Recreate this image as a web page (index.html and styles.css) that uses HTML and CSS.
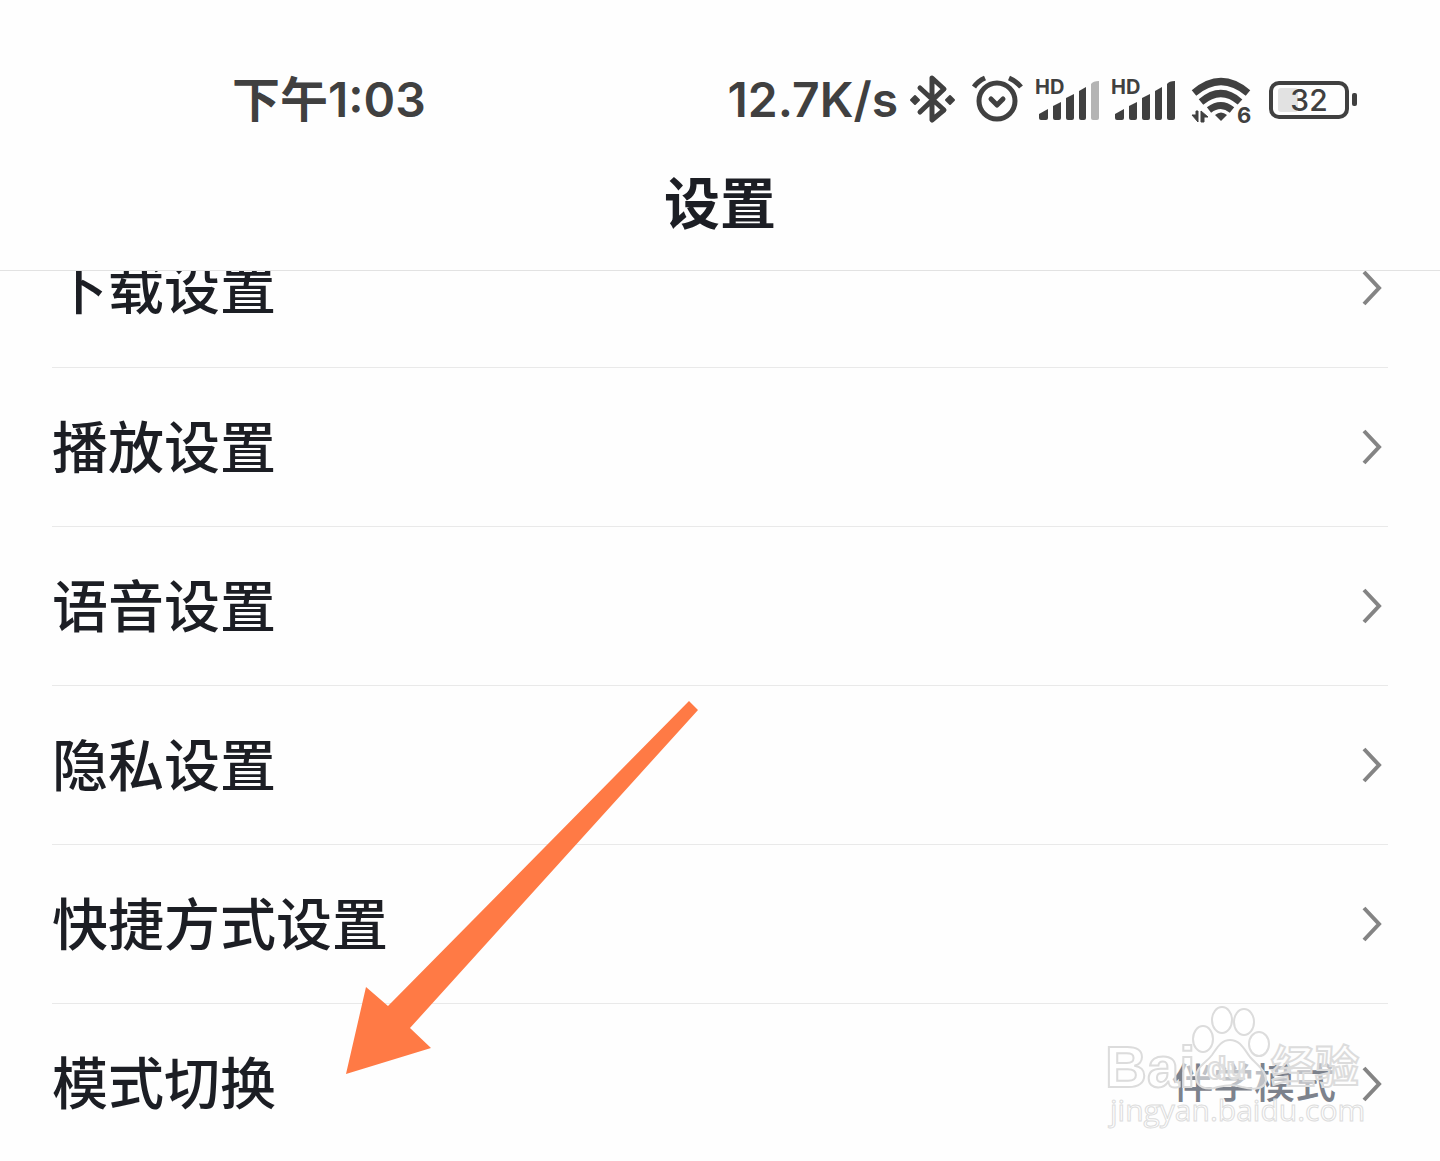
FILE: index.html
```html
<!DOCTYPE html>
<html lang="zh-CN">
<head>
    <meta charset="UTF-8">
    <meta name="viewport" content="width=device-width, initial-scale=1.0">
    <title>设置</title>
    <link rel="stylesheet" href="styles.css">
</head>
<body>
    <svg class="defs" aria-hidden="true">
        <symbol id="chevron" viewBox="0 0 24 40">
            <path d="M4 4 L19 20 L4 36" fill="none" stroke="currentColor" stroke-width="4"/>
        </symbol>
    </svg>

    <div class="app">
        <header class="header">
            <div class="status-bar">
                <span class="time">下午1:03</span>
                <div class="status-icons">
                    <span class="speed">12.7K/s</span>

                    <!-- bluetooth -->
                    <svg width="50" height="52" viewBox="0 0 50 52">
                        <path d="M10 14 L34 36 L22 46 V4 L34 15 L10 38" fill="none" stroke="currentColor" stroke-width="5" stroke-linejoin="round" stroke-linecap="round"/>
                        <path d="M1 26 L5 22 L9 26 L5 30 Z M36 26 L40 22 L44 26 L40 30 Z" fill="currentColor" stroke="currentColor" stroke-width="2" stroke-linejoin="round"/>
                    </svg>

                    <!-- alarm -->
                    <svg width="52" height="52" viewBox="0 0 52 52">
                        <g fill="none" stroke="currentColor" stroke-linejoin="round">
                            <circle cx="25" cy="27" r="18" stroke-width="5"/>
                            <path d="M19 25 L25 31 L31 25" stroke-width="5" stroke-linecap="round"/>
                            <path d="M2 13 Q6 7 13 4 M37 4 Q44 7 49 13" stroke-width="5"/>
                        </g>
                    </svg>

                    <!-- signal, SIM 1 -->
                    <svg class="signal" width="64" height="52" viewBox="0 0 64 52">
                        <text x="-1" y="20">HD</text>
                        <path d="M3 44 V40 L12 35 V44 Q12 46 10 46 H5 Q3 46 3 44 Z"/>
                        <path d="M17 44 V32 L25 28 V44 Q25 46 23 46 H19 Q17 46 17 44 Z"/>
                        <path d="M30 44 V24 L38 20 V44 Q38 46 36 46 H32 Q30 46 30 44 Z"/>
                        <path d="M43 44 V17 L50 13 V44 Q50 46 48 46 H45 Q43 46 43 44 Z"/>
                        <path class="signal-off" d="M55 44 V10 Q57 7 63 7 V44 Q63 46 61 46 H57 Q55 46 55 44 Z"/>
                    </svg>

                    <!-- signal, SIM 2 -->
                    <svg class="signal" width="64" height="52" viewBox="0 0 64 52">
                        <text x="-1" y="20">HD</text>
                        <path d="M3 44 V40 L12 35 V44 Q12 46 10 46 H5 Q3 46 3 44 Z"/>
                        <path d="M17 44 V32 L25 28 V44 Q25 46 23 46 H19 Q17 46 17 44 Z"/>
                        <path d="M30 44 V24 L38 20 V44 Q38 46 36 46 H32 Q30 46 30 44 Z"/>
                        <path d="M43 44 V17 L50 13 V44 Q50 46 48 46 H45 Q43 46 43 44 Z"/>
                        <path d="M55 44 V10 Q57 7 63 7 V44 Q63 46 61 46 H57 Q55 46 55 44 Z"/>
                    </svg>

                    <!-- wifi -->
                    <svg class="wifi" width="64" height="52" viewBox="0 0 64 52">
                        <g fill="none" stroke="currentColor" stroke-width="7">
                            <path d="M6 19 Q33 -4 60 19"/>
                            <path d="M13 28 Q33 11 52 28"/>
                            <path d="M21 36 Q33 27 44 36"/>
                        </g>
                        <path d="M27 41 Q33 36 39 41 L33 47 Z" fill="currentColor"/>
                        <path d="M10 37 V48 L4 41 H8 V37 Z M13 48 V37 L20 43 H16 V48 Z" fill="currentColor" stroke="currentColor"/>
                        <text x="49" y="49">6</text>
                    </svg>

                    <!-- battery -->
                    <svg class="battery" width="96" height="52" viewBox="0 0 96 52">
                        <rect x="7" y="9" width="76" height="34" rx="8" fill="none" stroke="currentColor" stroke-width="4"/>
                        <rect x="14" y="14" width="20" height="24" rx="3" fill="#e2e2e2"/>
                        <rect x="88" y="19" width="5" height="13" rx="2" fill="currentColor"/>
                        <text x="45" y="37" text-anchor="middle">32</text>
                    </svg>
                </div>
            </div>
            <h1>设置</h1>
        </header>

        <main class="content">
            <ul class="settings-list">
                <li>
                    <a href="#" class="settings-item">
                        <span class="label">下载设置</span>
                        <svg class="chevron"><use href="#chevron"/></svg>
                    </a>
                </li>
                <li>
                    <a href="#" class="settings-item">
                        <span class="label">播放设置</span>
                        <svg class="chevron"><use href="#chevron"/></svg>
                    </a>
                </li>
                <li>
                    <a href="#" class="settings-item">
                        <span class="label">语音设置</span>
                        <svg class="chevron"><use href="#chevron"/></svg>
                    </a>
                </li>
                <li>
                    <a href="#" class="settings-item">
                        <span class="label">隐私设置</span>
                        <svg class="chevron"><use href="#chevron"/></svg>
                    </a>
                </li>
                <li>
                    <a href="#" class="settings-item">
                        <span class="label">快捷方式设置</span>
                        <svg class="chevron"><use href="#chevron"/></svg>
                    </a>
                </li>
                <li>
                    <a href="#" class="settings-item">
                        <span class="label">模式切换</span>
                        <span class="value">伴学模式</span>
                        <svg class="chevron"><use href="#chevron"/></svg>
                    </a>
                </li>
            </ul>

            <svg class="arrow" width="354" height="374" viewBox="0 0 354 374">
                <path d="M0 373 L20 286 L42 305 L343 0 L352 9 L64 327 L85 347 Z"/>
            </svg>

            <svg class="watermark" width="264" height="132" viewBox="0 0 264 132">
                <text class="brand" x="-1" y="84">Bai</text>
                <g class="paw">
                    <ellipse cx="97" cy="36" rx="10" ry="13"/>
                    <ellipse cx="116" cy="17" rx="10" ry="13"/>
                    <ellipse cx="138" cy="19" rx="10" ry="13"/>
                    <ellipse cx="153" cy="41" rx="10" ry="12"/>
                    <path d="M124 37 C134 37 138 46 144 54 C151 62 161 68 160 78 C158 88 144 86 136 84 C128 81 120 82 112 84 C100 88 90 84 90 74 C90 64 100 60 106 52 C111 45 115 37 124 37 Z"/>
                </g>
                <text class="brand-du" x="101" y="76">du</text>
                <text class="brand-cn" x="165" y="80">经验</text>
                <text class="site" x="4" y="118">jingyan.baidu.com</text>
            </svg>
        </main>
    </div>
</body>
</html>
```

FILE: styles.css
```css
:root {
    --text-color: #1c1e24;
    --status-color: #404040;
    --value-color: #7d828c;
    --chevron-color: #848484;
    --border-color: #e9e9e9;
    --arrow-color: #ff7a45;
    --watermark-color: #dcdcdc;
}

* {
    box-sizing: border-box;
}

body {
    font-family: 'Noto Sans CJK SC', sans-serif;
    margin: 0;
    background-color: #fefefe;
    color: var(--text-color);
}

svg {
    overflow: visible;
}

.defs {
    display: none;
}

.app {
    display: flex;
    flex-direction: column;
    height: 100vh;
}

.header {
    flex: none;
    padding: 60px 0 10px;
    border-bottom: 1px solid #e2e2e2;
}

.status-bar {
    display: flex;
    align-items: center;
    justify-content: space-between;
    height: 80px;
    padding: 0 80px 0 232px;
    color: var(--status-color);
    font-family: Inter, 'Noto Sans CJK SC', sans-serif;
    font-size: 48px;
    font-weight: 600;
    line-height: 80px;
}

.status-icons {
    display: flex;
    align-items: center;
    gap: 12px;
}

.signal {
    fill: currentColor;
}

.signal text {
    font-size: 20px;
    font-weight: 700;
}

.signal-off {
    fill: #b4b4b4;
}

.wifi text {
    font-size: 22px;
    font-weight: 700;
    fill: currentColor;
}

.battery text {
    font-size: 30px;
    font-weight: 500;
    fill: currentColor;
}

.header h1 {
    margin: 0;
    font-size: 56px;
    font-weight: 700;
    line-height: 120px;
    text-align: center;
}

.content {
    position: relative;
    flex: 1;
    min-height: 0;
    overflow: hidden;
}

/* list is scrolled part of the way under the header */
.settings-list {
    list-style: none;
    margin: -62px 52px 0;
    padding: 0;
}

.settings-item {
    display: flex;
    align-items: center;
    height: 159px;
    padding-right: 4px;
    border-bottom: 1px solid var(--border-color);
    color: var(--text-color);
    font-size: 56px;
    font-weight: 500;
    text-decoration: none;
}

.settings-list li:last-child .settings-item {
    border-bottom: none;
}

.label,
.value {
    padding-bottom: 8px;
}

.value {
    margin-left: auto;
    color: var(--value-color);
    font-size: 41px;
    font-weight: 500;
}

.chevron {
    width: 24px;
    height: 40px;
    margin-left: auto;
    color: var(--chevron-color);
}

.value + .chevron {
    margin-left: 24px;
}

.arrow {
    position: absolute;
    top: 430px;
    left: 346px;
    fill: var(--arrow-color);
}

.watermark {
    position: absolute;
    top: 732px;
    right: 70px;
    fill: rgba(255, 255, 255, 0.5);
    stroke: var(--watermark-color);
    stroke-width: 2px;
    pointer-events: none;
}

.brand {
    font-family: 'Liberation Sans', sans-serif;
    font-size: 58px;
    font-weight: 700;
}

.brand-du {
    font-family: 'Liberation Sans', sans-serif;
    font-size: 32px;
    font-weight: 700;
}

.brand-cn {
    font-size: 44px;
    font-weight: 700;
}

.site {
    font-family: 'Open Sans', sans-serif;
    font-size: 30px;
    font-weight: 400;
    stroke-width: 1px;
}
```
